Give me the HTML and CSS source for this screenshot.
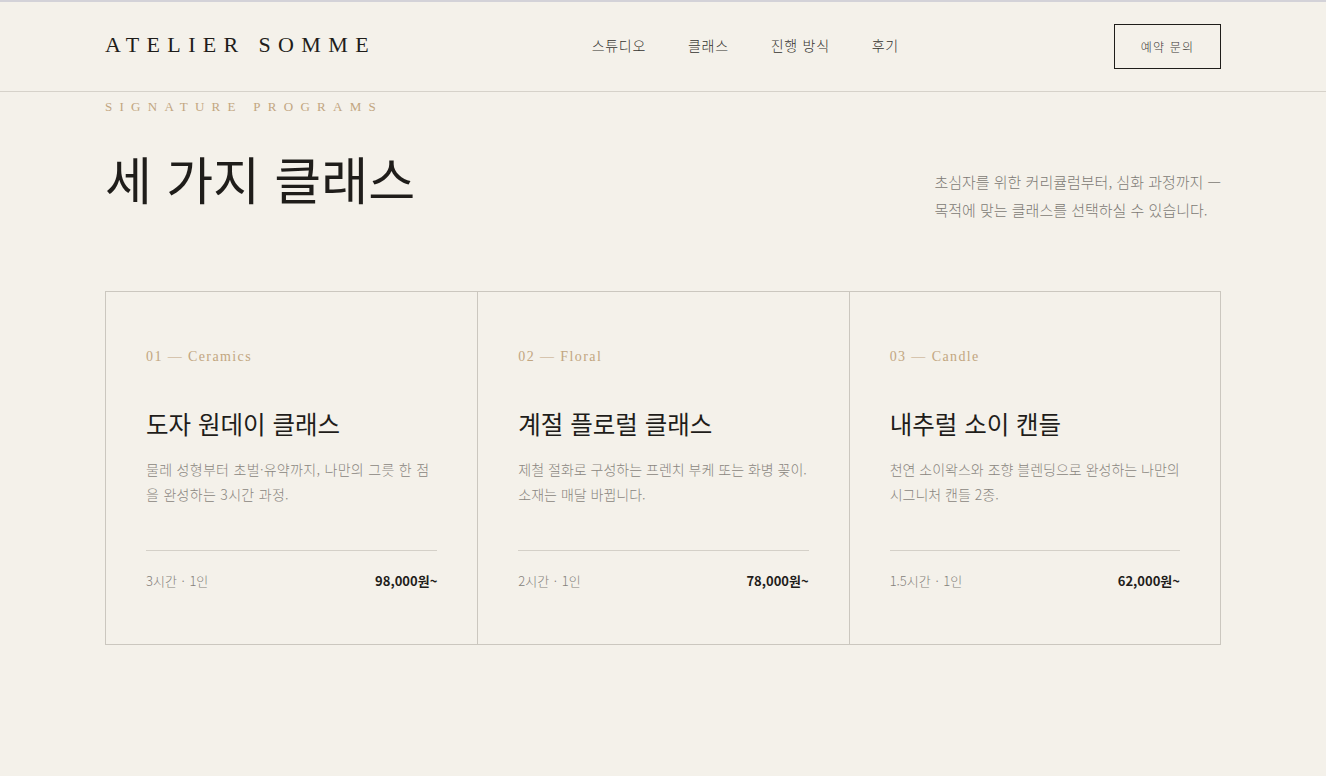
FILE: index.html
```html
<!DOCTYPE html>
<html lang="ko">
<head>
<meta charset="utf-8">
<title>Atelier Somme</title>
<link rel="stylesheet" href="styles.css">
</head>
<body>
<header class="site-header">
  <div class="wrap header-inner">
    <div class="logo">ATELIER SOMME</div>
    <nav class="nav">
      <a href="#">스튜디오</a>
      <a href="#">클래스</a>
      <a href="#">진행 방식</a>
      <a href="#">후기</a>
    </nav>
    <a class="btn" href="#">예약 문의</a>
  </div>
</header>
<main class="wrap programs">
  <div class="eyebrow">SIGNATURE PROGRAMS</div>
  <div class="intro">
    <h1 class="title">세 가지 클래스</h1>
    <p class="lead">초심자를 위한 커리큘럼부터, 심화 과정까지 —<br>목적에 맞는 클래스를 선택하실 수 있습니다.</p>
  </div>
  <div class="cards">
    <article class="card">
      <div class="card-label">01 — Ceramics</div>
      <h2 class="card-title">도자 원데이 클래스</h2>
      <p class="card-desc card-desc-wide">물레 성형부터 초벌·유약까지, 나만의 그릇 한 점을 완성하는 3시간 과정.</p>
      <div class="card-foot"><span class="meta">3시간 · 1인</span><span class="price">98,000원~</span></div>
    </article>
    <article class="card">
      <div class="card-label">02 — Floral</div>
      <h2 class="card-title">계절 플로럴 클래스</h2>
      <p class="card-desc">제철 절화로 구성하는 프렌치 부케 또는 화병 꽂이. 소재는 매달 바뀝니다.</p>
      <div class="card-foot"><span class="meta">2시간 · 1인</span><span class="price">78,000원~</span></div>
    </article>
    <article class="card">
      <div class="card-label">03 — Candle</div>
      <h2 class="card-title">내추럴 소이 캔들</h2>
      <p class="card-desc">천연 소이왁스와 조향 블렌딩으로 완성하는 나만의 시그니처 캔들 2종.</p>
      <div class="card-foot"><span class="meta">1.5시간 · 1인</span><span class="price">62,000원~</span></div>
    </article>
  </div>
</main>
</body>
</html>
```
FILE: styles.css
```css
* { box-sizing: border-box; }
html, body { margin: 0; padding: 0; }
body {
  background: #f4f1ea;
  color: #1f1d1a;
  font-family: "Noto Sans CJK KR", "Noto Sans", sans-serif;
  border-top: 2px solid #d3d2d8;
}
a { color: inherit; text-decoration: none; }
.wrap { max-width: 1116px; margin: 0 auto; }

.site-header { border-bottom: 1px solid #d6d2ca; }
.header-inner {
  height: 89px;
  display: flex;
  align-items: center;
  justify-content: space-between;
}
.logo {
  font-family: "Liberation Serif", "DejaVu Serif", serif;
  font-size: 22px;
  line-height: 26px;
  letter-spacing: 0.334em;
  margin-right: -0.334em;
  color: #1f1d1a;
  margin-bottom: 3px;
}
.nav { display: flex; gap: 42px; margin-bottom: 3px; margin-left: 8px; }
.nav a { font-size: 14px; line-height: 20px; letter-spacing: 0.05em; color: #35332f; font-weight: 300; }
.btn {
  display: flex; align-items: center; justify-content: center;
  width: 107px; height: 45px;
  border: 1px solid #1f1d1a;
  font-size: 12px; letter-spacing: 0.1em; color: #3a3835; font-weight: 300;
}

.programs { padding-top: 7px; }
.eyebrow {
  font-family: "Liberation Serif", "DejaVu Serif", serif;
  font-size: 13px;
  line-height: 16px;
  letter-spacing: 0.56em;
  color: #c2a681;
}
.intro {
  display: flex;
  justify-content: space-between;
  align-items: flex-start;
  margin-top: 33px;
}
.title {
  margin: 0;
  font-size: 51px;
  line-height: 60px;
  font-weight: 400;
  color: #1f1d1a;
}
.lead {
  margin: 20px 0 0;
  white-space: nowrap;
  font-size: 15px;
  line-height: 28px;
  color: #7d7a75;
  font-weight: 300;
}

.cards {
  margin-top: 67px;
  display: grid;
  grid-template-columns: repeat(3, 1fr);
  border: 1px solid #cbc7bf;
}
.card { padding: 55px 40px 53px; }
.card + .card { border-left: 1px solid #cbc7bf; }
.card-label {
  font-family: "Liberation Serif", "DejaVu Serif", serif;
  font-size: 14px;
  line-height: 20px;
  letter-spacing: 0.1em;
  color: #c2a681;
}
.card-title {
  margin: 40px 0 0;
  font-size: 24.5px;
  line-height: 34px;
  font-weight: 400;
  color: #1f1d1a;
}
.card-desc {
  margin: 16px 0 0;
  font-size: 14px;
  line-height: 25px;
  color: #8a8680;
  font-weight: 300;
  min-height: 50px;
}
.card-desc-wide { letter-spacing: 0.3px; }
.card-foot {
  margin-top: 43px;
  border-top: 1px solid #d4d0c8;
  padding-top: 20px;
  display: flex;
  justify-content: space-between;
  font-size: 13px;
  line-height: 20px;
}
.meta { color: #85817b; font-weight: 300; word-spacing: 1px; }
.price { font-weight: 700; color: #1f1d1a; }
```
